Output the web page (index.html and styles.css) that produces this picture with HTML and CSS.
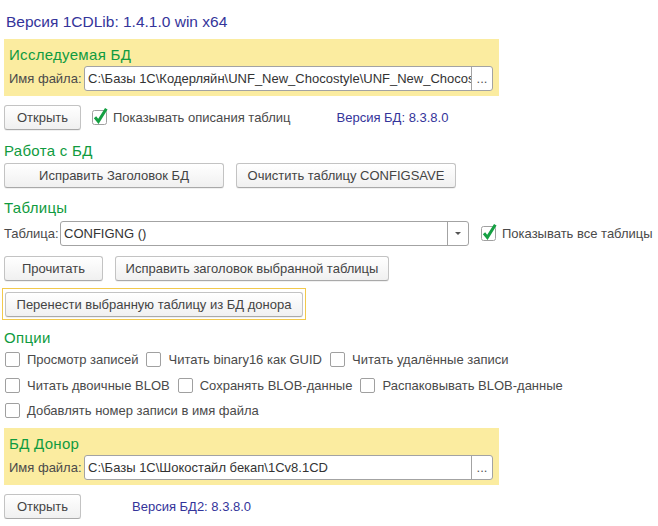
FILE: index.html
```html
<!DOCTYPE html>
<html>
    <head>
        <title>1CDLib</title>
        <link rel="stylesheet" href="styles.css">
    </head>
    <body>
        <div class="form">
            <div class="title">Версия 1CDLib: 1.4.1.0 win x64</div>

            <div class="panel">
                <div class="group-title">Исследуемая БД</div>
                <div class="field-row">
                    <span class="label">Имя файла:</span>
                    <div class="input file-input">
                        <span class="value">C:\Базы 1C\Кодерляйн\UNF_New_Chocostyle\UNF_New_Chocostyle\1Cv8.1CD</span>
                        <span class="pick">...</span>
                    </div>
                </div>
            </div>

            <div class="row row-open">
                <button class="btn btn-open">Открыть</button>
                <label class="check check-desc">
                    <svg class="box" width="15" height="15" viewBox="0 0 15 15"><rect x="0.5" y="0.5" width="14" height="14" rx="2" fill="#fff" stroke="#a0a0a0"/><path d="M3 7.2 L6.4 11.4 L14.3 -1.2" fill="none" stroke="#15a043" stroke-width="3"/></svg>
                    Показывать описания таблиц
                </label>
                <span class="version version-1">Версия БД: 8.3.8.0</span>
            </div>

            <div class="section-title title-work">Работа с БД</div>
            <div class="row">
                <button class="btn btn-wide">Исправить Заголовок БД</button>
                <button class="btn btn-wide">Очистить таблицу CONFIGSAVE</button>
            </div>

            <div class="section-title title-tables">Таблицы</div>
            <div class="row row-table">
                <span class="label">Таблица:</span>
                <div class="input select">
                    <span class="value">CONFIGNG ()</span>
                    <span class="drop"><svg width="6" height="3" viewBox="0 0 6 3"><path d="M0 0 H6 L3 3 Z" fill="#555"/></svg></span>
                </div>
                <label class="check check-all">
                    <svg class="box" width="15" height="15" viewBox="0 0 15 15"><rect x="0.5" y="0.5" width="14" height="14" rx="2" fill="#fff" stroke="#a0a0a0"/><path d="M3 7.2 L6.4 11.4 L14.3 -1.2" fill="none" stroke="#15a043" stroke-width="3"/></svg>
                    Показывать все таблицы
                </label>
            </div>
            <div class="row row-read">
                <button class="btn btn-read">Прочитать</button>
                <button class="btn btn-fix">Исправить заголовок выбранной таблицы</button>
            </div>
            <div class="focus-frame">
                <button class="btn btn-move">Перенести выбранную таблицу из БД донора</button>
            </div>

            <div class="section-title title-options">Опции</div>
            <div class="options">
                <div class="opt-row">
                    <label class="check"><span class="empty-box"></span>Просмотр записей</label>
                    <label class="check"><span class="empty-box"></span>Читать binary16 как GUID</label>
                    <label class="check"><span class="empty-box"></span>Читать удалённые записи</label>
                </div>
                <div class="opt-row">
                    <label class="check"><span class="empty-box"></span>Читать двоичные BLOB</label>
                    <label class="check"><span class="empty-box"></span>Сохранять BLOB-данные</label>
                    <label class="check"><span class="empty-box"></span>Распаковывать BLOB-данные</label>
                </div>
                <div class="opt-row">
                    <label class="check"><span class="empty-box"></span>Добавлять номер записи в имя файла</label>
                </div>
            </div>

            <div class="panel panel-donor">
                <div class="group-title">БД Донор</div>
                <div class="field-row">
                    <span class="label">Имя файла:</span>
                    <div class="input file-input">
                        <span class="value">C:\Базы 1C\Шокостайл бекап\1Cv8.1CD</span>
                        <span class="pick">...</span>
                    </div>
                </div>
            </div>

            <div class="row row-open row-open-donor">
                <button class="btn btn-open">Открыть</button>
                <span class="version version-2">Версия БД2: 8.3.8.0</span>
            </div>
        </div>
    </body>
</html>
```

FILE: styles.css
```css
body {
    margin: 0;
    background-color: #ffffff;
    font-family: "Liberation Sans", Arial, sans-serif;
    font-size: 13px;
    color: #4a4a4a;
}
.form {
    width: 658px;
    padding: 13px 0 0 4px;
    box-sizing: border-box;
}
.title {
    font-size: 15.5px;
    line-height: 18px;
    color: #34349a;
    padding-left: 2px;
}
.panel {
    width: 495px;
    margin-top: 8px;
    padding: 7px 6px 5px 5px;
    box-sizing: border-box;
    background-color: #fbeca0;
}
.group-title, .section-title {
    font-size: 15px;
    letter-spacing: 0.3px;
    line-height: 18px;
    color: #109b40;
}
.field-row {
    display: flex;
    align-items: center;
    margin-top: 2px;
}
.label {
    width: 75px;
    flex: none;
}
.input {
    display: flex;
    align-items: center;
    height: 25px;
    box-sizing: border-box;
    border: 1px solid #a3a3a3;
    border-radius: 3px;
    background-color: #ffffff;
    color: #333;
}
.input .value {
    flex: 1;
    overflow: hidden;
    white-space: nowrap;
    padding-left: 3px;
}
.file-input { width: 409px; }
.pick, .drop {
    width: 20px;
    height: 100%;
    flex: none;
    border-left: 1px solid #a3a3a3;
    display: flex;
    align-items: center;
    justify-content: center;
}
.pick { line-height: 22px; color: #555; }
.row {
    display: flex;
    align-items: center;
    gap: 12px;
    margin-top: 3px;
}
.btn {
    height: 25px;
    padding: 0 8px;
    font-family: inherit;
    font-size: 13px;
    color: #444;
    background: linear-gradient(#ffffff, #f0f0f0);
    border: 1px solid #c3c3c3;
    border-bottom-color: #a9a9a9;
    border-radius: 3px;
    box-shadow: 0 1px 0 rgba(0, 0, 0, 0.06);
    cursor: pointer;
}
.row-open { margin-top: 9px; gap: 0; }
.btn-open { width: 77px; }
.check {
    display: flex;
    align-items: center;
    gap: 6px;
    white-space: nowrap;
}
.box { flex: none; overflow: visible; }
.check-desc { margin-left: 11px; }
.version { color: #34349a; }
.version-1 { margin-left: 46px; }
.version-2 { margin-left: 51px; }
.title-work { margin-top: 12px; }
.btn-wide { width: 220px; }
.title-tables { margin-top: 11px; }
.row-table { margin-top: 4px; gap: 0; }
.row-table .label { width: 56px; }
.select { width: 409px; }
.check-all { margin-left: 12px; }
.row-read { margin-top: 10px; }
.btn-read { width: 99px; }
.btn-fix { width: 274px; }
.focus-frame {
    width: 304px;
    margin: 7px 0 0 -2px;
    padding: 3px 2px 2px 2px;
    box-sizing: border-box;
    border: 1px solid #f2c94c;
}
.btn-move { width: 298px; display: block; }
.title-options { margin-top: 9px; }
.options {
    display: flex;
    flex-direction: column;
    gap: 10.5px;
    margin-top: 5px;
    padding-left: 1px;
}
.opt-row {
    display: flex;
    height: 15px;
    gap: 8px;
}
.empty-box {
    width: 15px;
    height: 15px;
    box-sizing: border-box;
    border: 1px solid #a0a0a0;
    border-radius: 2px;
    background-color: #fff;
    flex: none;
}
.opt-row .check { gap: 7px; }
.panel-donor { margin-top: 10px; }
.row-open-donor { margin-top: 9px; }
```
